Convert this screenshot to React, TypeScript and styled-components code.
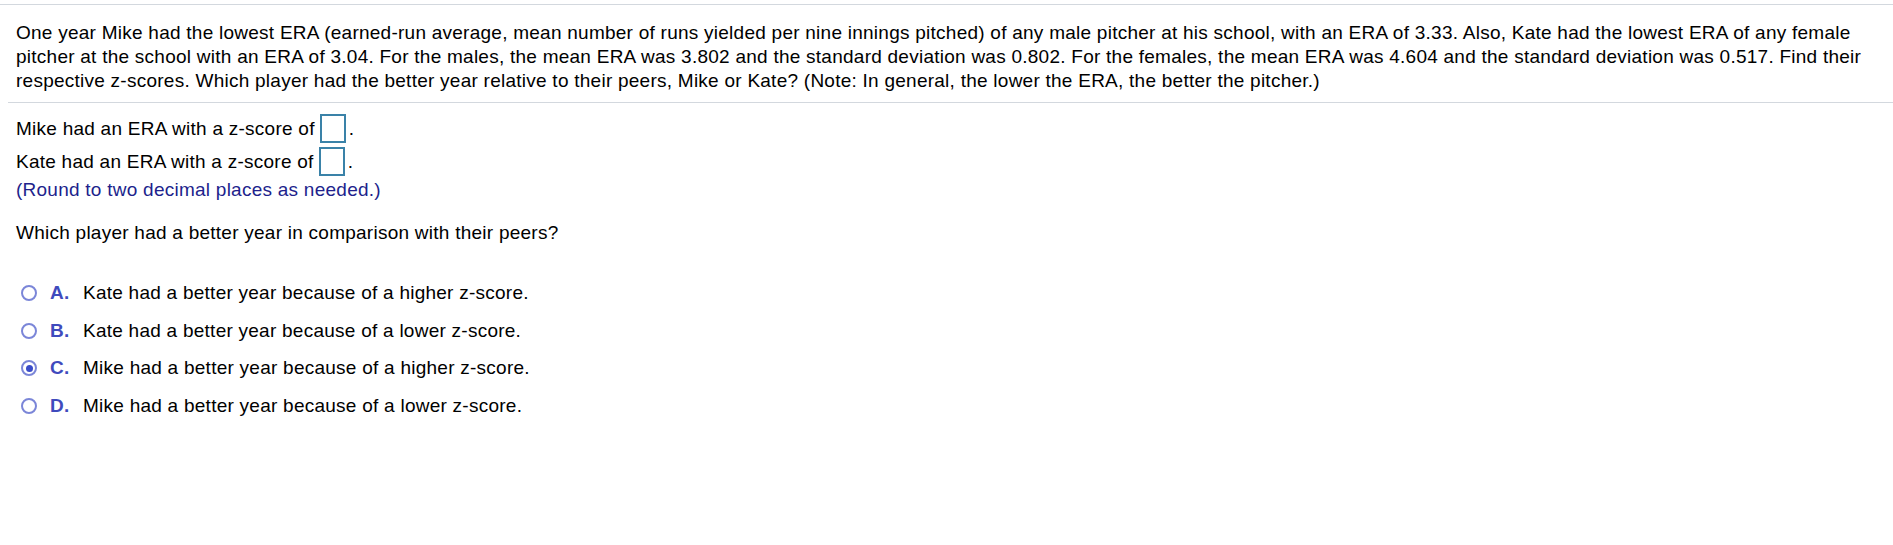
import styled, { createGlobalStyle } from "styled-components";

const GlobalStyle = createGlobalStyle`
  body {
    margin: 0;
    background: #ffffff;
    font-family: "Liberation Sans", Arial, sans-serif;
    color: #000000;
  }
`;

const Page = styled.div`
  width: 1893px;
  padding-top: 4px;
  font-size: 19px;
  letter-spacing: 0.25px;
  line-height: 24px;
`;

const TopRule = styled.div`
  border-top: 1px solid #d3d8de;
`;

const Question = styled.p`
  margin: 0 0 0 8px;
  padding: 16px 8px 9px 8px;
  border-bottom: 1px solid #d3d8de;
`;

const Answers = styled.div`
  padding: 9px 16px 0 16px;
`;

const BlankRow = styled.div`
  display: flex;
  align-items: center;
  height: 33px;
`;

const Blank = styled.span`
  display: inline-block;
  box-sizing: border-box;
  width: 26px;
  height: 29px;
  margin: 0 3px 0 5px;
  border: 2px solid #3a82a8;
  background: #ffffff;
`;

const Hint = styled.div`
  color: #211f8c;
`;

const Prompt = styled.div`
  margin-top: 19px;
`;

const Options = styled.div`
  margin-top: 29px;
  padding-left: 5px;
`;

const OptionRow = styled.div`
  display: flex;
  align-items: center;
  height: 37.7px;
`;

const Radio = styled.span<{ $checked?: boolean }>`
  position: relative;
  box-sizing: border-box;
  width: 16px;
  height: 16px;
  border-radius: 50%;
  border: 2px solid #7b86d8;
  flex-shrink: 0;

  &::after {
    content: "";
    display: ${(p) => (p.$checked ? "block" : "none")};
    position: absolute;
    left: 2.5px;
    top: 2.5px;
    width: 7px;
    height: 7px;
    border-radius: 50%;
    background: #3a4cc9;
  }
`;

const Letter = styled.span`
  width: 33px;
  margin-left: 13px;
  font-weight: bold;
  color: #3f4bbd;
`;

const options = [
  { letter: "A.", text: "Kate had a better year because of a higher z-score." },
  { letter: "B.", text: "Kate had a better year because of a lower z-score." },
  { letter: "C.", text: "Mike had a better year because of a higher z-score.", checked: true },
  { letter: "D.", text: "Mike had a better year because of a lower z-score." },
];

export default function App() {
  return (
    <Page>
      <GlobalStyle />
      <TopRule />
      <Question>
        One year Mike had the lowest ERA (earned-run average, mean number of runs yielded per nine
        innings pitched) of any male pitcher at his school, with an ERA of 3.33. Also, Kate had the
        lowest ERA of any female pitcher at the school with an ERA of 3.04. For the males, the mean
        ERA was 3.802 and the standard deviation was 0.802. For the females, the mean ERA was 4.604
        and the standard deviation was 0.517. Find their respective z-scores. Which player had the
        better year relative to their peers, Mike or Kate? (Note: In general, the lower the ERA, the
        better the pitcher.)
      </Question>

      <Answers>
        <BlankRow>
          Mike had an ERA with a z-score of
          <Blank />.
        </BlankRow>
        <BlankRow>
          Kate had an ERA with a z-score of
          <Blank />.
        </BlankRow>
        <Hint>(Round to two decimal places as needed.)</Hint>

        <Prompt>Which player had a better year in comparison with their peers?</Prompt>

        <Options>
          {options.map((o) => (
            <OptionRow key={o.letter}>
              <Radio $checked={o.checked} />
              <Letter>{o.letter}</Letter>
              <span>{o.text}</span>
            </OptionRow>
          ))}
        </Options>
      </Answers>
    </Page>
  );
}
